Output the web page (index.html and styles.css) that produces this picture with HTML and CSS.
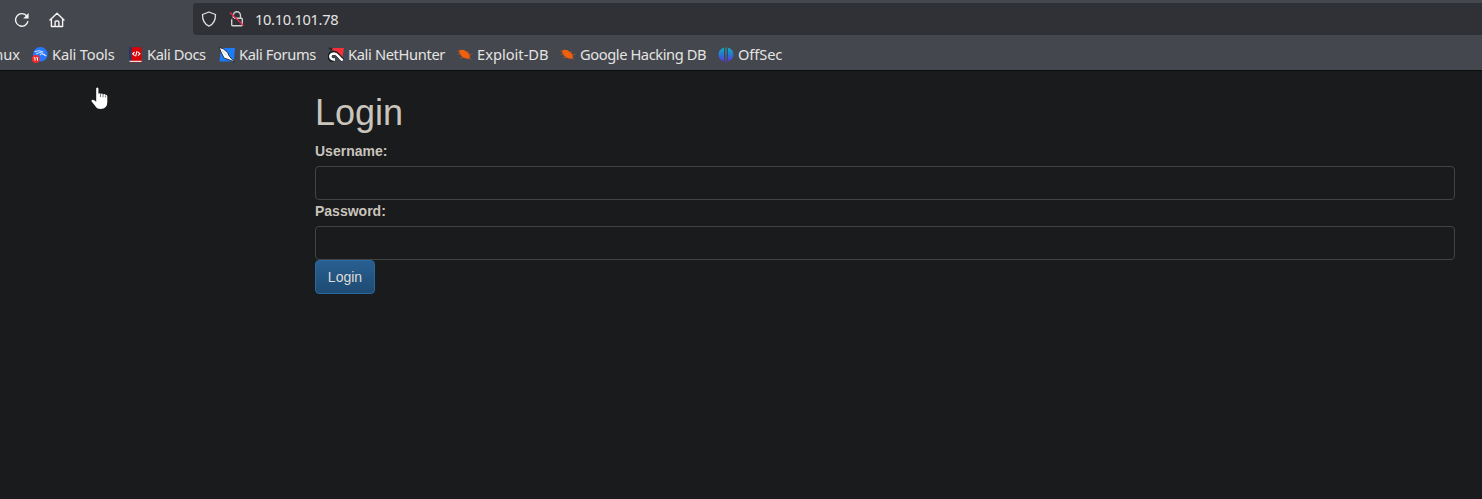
FILE: index.html
```html
<!DOCTYPE html>
<html lang="en">
<head>
<meta charset="utf-8">
<title>Login</title>
<link rel="stylesheet" href="styles.css">
</head>
<body>
<header class="chrome">
  <div class="toolbar">
    <svg class="tool reload" viewBox="0 0 16 16"><path d="M14 9.2A6.3 6.3 0 1 1 12.4 3.6L13.6 5" fill="none" stroke="#f4f4f1" stroke-width="1.4"/><path d="M14.6 1v5.6H9.2z" fill="#f4f4f1"/></svg>
    <svg class="tool home" viewBox="0 0 16 16" fill="none" stroke="#f4f4f1" stroke-width="1.4" stroke-linejoin="round" stroke-linecap="round"><path d="M1 7.9L8 1.2l7 6.7M2.4 7v7.5h11.2V7M6.1 14.3V10q0-1 1-1h1.8q1 0 1 1v4.3"/></svg>
    <div class="address">
      <svg class="shield" viewBox="0 0 16 16" fill="none" stroke="#e2e2df" stroke-width="1.3" stroke-linejoin="round"><path d="M8 1L14.5 3.5C14.6 9 12.4 13.2 8 15.2 3.6 13.2 1.4 9 1.5 3.5z"/></svg>
      <svg class="lock" viewBox="0 0 16 16" fill="none"><path d="M4.3 7V4.4a3.6 3.6 0 0 1 7.2 0V7M2.7 8.2v5.5q0 1 1 1h8.6q1 0 1-1V8.2q0-1-1-1H5" stroke="#d0d0ce" stroke-width="1.4"/><path d="M1 1.5l13.5 13" stroke="#e22850" stroke-width="1.4"/></svg>
      <span>10.10.101.78</span>
    </div>
  </div>
  <nav class="bookmarks">
    <a class="mark cut"><span>nux</span></a>
    <a class="mark tools"><svg viewBox="0 0 16 16"><circle cx="8.4" cy="7.3" r="7.2" fill="#2777ff"/><path d="M2.5 4.7Q7 2.7 11.5 5M4 7q4.5-2.5 6.5-.5 1 2 4 2.4M8 8q1-2 5-.5" fill="none" stroke="#d9e9ff"/><circle cx="3.8" cy="12" r="4" fill="#ef2929"/><path d="M1.8 10.7h1.2v3M4.3 10.7h1.2v3" fill="none" stroke="#fff"/></svg><span>Kali Tools</span></a>
    <a class="mark docs"><svg viewBox="0 0 16 16"><path d="M1 0h3v14H1z" fill="#213c67"/><path d="M3.5.2h10v15H2v-1h1.5z" fill="#da0007"/><path d="M1 13.8h12.5V15H2z" fill="#edd"/><path d="M6.6 5L4.7 6.8l1.9 1.8M10 5l1.9 1.8L10 8.6M9 4.2L7.6 9.3" fill="none" stroke="#fff" stroke-width="1.1"/></svg><span>Kali Docs</span></a>
    <a class="mark forums"><svg viewBox="0 0 16 16"><path d="M2 1h14l-1.2 13.5H.5z" fill="#1b7bfa"/><path d="M0 .3L4.5 2l4 3.5 2 4 5.3 5.7-5.6-2.4-5-1.6-2.6-5z" fill="#fff" stroke="#202329" stroke-width=".9"/><path d="M3 3.5l5 5" stroke="#a4b3c7" stroke-width=".7"/></svg><span>Kali Forums</span></a>
    <a class="mark hunter"><svg viewBox="0 0 16 16"><path d="M3 1h13l-2 12z" fill="#f5303a"/><path d="M0 .8h5l-2 3zM1 11l1 4 3-1z" fill="#26282d"/><path d="M5.5 13C-.2 12.5 1 6 6 5.8c4 0 4.5 5 9.2 7.6" fill="none" stroke="#191b20" stroke-width="4.2"/><path d="M7 12.5C.8 13 1 6.8 6 6.4c4 0 4 4.2 8.8 6.9" fill="none" stroke="#fff" stroke-width="2.5"/></svg><span>Kali NetHunter</span></a>
    <a class="mark exploit"><svg viewBox="0 0 16 16"><path d="M1.6 4L4 2.7 7 3l3.5 2.3 2 2.2.5 4-3 .3-4-1.3L3.5 8z" fill="#f2600c"/><path d="M.5 7.2h4M3 11l4-1M.5 4l3 1M10 5.5L12 4M11 7.5l4.5-.3M12 10l2 3" fill="none" stroke="#b8562b" stroke-width=".7"/></svg><span>Exploit-DB</span></a>
    <a class="mark hacking"><svg viewBox="0 0 16 16"><path d="M1.6 4L4 2.7 7 3l3.5 2.3 2 2.2.5 4-3 .3-4-1.3L3.5 8z" fill="#f2600c"/><path d="M.5 7.2h4M3 11l4-1M.5 4l3 1M10 5.5L12 4M11 7.5l4.5-.3M12 10l2 3" fill="none" stroke="#b8562b" stroke-width=".7"/></svg><span>Google Hacking DB</span></a>
    <a class="mark offsec"><svg viewBox="0 0 16 16"><defs><linearGradient id="og" x2="0" y2="1"><stop stop-color="#10aebf"/><stop offset=".5" stop-color="#2876cf"/><stop offset="1" stop-color="#682bdc"/></linearGradient></defs><path d="M6 .8v13.5C2.6 13.5.6 10.8.6 7.5S2.8 1.5 6 .8zM10 .8v13.5c3.4-.8 5.4-3.5 5.4-6.8S13.2 1.5 10 .8zM7.4.5h1.2v15H7.4z" fill="url(#og)"/></svg><span>OffSec</span></a>
  </nav>
</header>
<main class="page">
  <form class="login">
    <h1>Login</h1>
    <label for="user">Username:</label>
    <input id="user" type="text">
    <label for="pass">Password:</label>
    <input id="pass" type="password">
    <button type="button">Login</button>
  </form>
</main>
<svg class="pointer" viewBox="0 0 17 23"><path d="M5.2 1.2Q6.4-.2 7.4 1.2v5.5q1.6-1 2.3.2 1.6-.8 2.3.5 1.8-.8 2.6.5 1.7-.3 1.7 1.8V15q0 7-6.7 7-4 0-5.7-3.5L.8 14.8Q0 13 1.4 12.7q1.7-.1 3.8 2.1z" fill="#fff"/><path d="M9.5 7v3M12 7.3v3M14.4 8.5v2" stroke="#1b1c22" stroke-width=".6"/></svg>
</body>
</html>
```
FILE: styles.css
```css
* { box-sizing: border-box; }
body {
  margin: 0;
  height: 499px;
  overflow: hidden;
  background: #191b1c;
  color: #c9c4bc;
  font: 14px/20px "Liberation Sans", Arial, sans-serif;
}
.chrome {
  height: 71px;
  overflow: hidden;
  background: #45474f;
  border-bottom: 1px solid #0c0c0d;
  color: #e4e4e2;
  font-family: "Noto Sans", sans-serif;
}
.toolbar {
  display: flex;
  align-items: center;
  height: 35px;
  padding: 3px 0 0 14px;
}
svg { display: block; width: 16px; height: 16px; flex: none; }
.tool { margin-top: 2px; }
.home { margin-left: 19px; }
.address {
  display: flex;
  align-items: center;
  flex: 1;
  height: 32px;
  margin-left: 128px;
  padding: 1px 0 0 8px;
  background: #303136;
  border-radius: 4px 0 0 4px;
  font-size: 14.67px;
  letter-spacing: -.33px;
}
.address svg { margin-bottom: 1px; }
.address span, .mark span { padding-bottom: 2px; }
.lock { margin: 0 10px 0 12px; }
.bookmarks { display: flex; height: 35px; padding-top: 2px; }
.mark {
  display: flex;
  align-items: center;
  gap: 4px;
  height: 36px;
  flex: none;
  white-space: nowrap;
  font-size: 14.67px;
}
.cut { width: 32px; padding-right: 12px; justify-content: flex-end; }
.tools { width: 96px; letter-spacing: -.18px; }
.docs { width: 91px; letter-spacing: -.4px; }
.docs svg { margin-right: -1px; }
.forums { width: 109px; letter-spacing: -.36px; }
.hunter { width: 129px; letter-spacing: -.35px; }
.exploit { width: 103px; }
.hacking { width: 158px; letter-spacing: -.41px; }
.offsec { letter-spacing: -.1px; }
.login { width: 1140px; margin: 22px 0 0 315px; }
h1 { margin: 0 0 9px; font-size: 36px; font-weight: normal; line-height: 39px; }
label { display: block; height: 20px; margin-bottom: 5px; font-weight: bold; }
input {
  display: block;
  width: 100%;
  height: 34px;
  padding: 6px 12px;
  background: #191b1c;
  color: #c9c4bc;
  border: 1px solid #414345;
  border-radius: 4px;
}
input + label { padding-top: 1px; height: 21px; }
button {
  display: block;
  width: 60px;
  height: 34px;
  padding: 0;
  border: 1px solid #2867a0;
  border-radius: 4px;
  background: linear-gradient(#285f91, #1e4b72);
  color: #dedbd5;
  font: 14px/20px "Liberation Sans", Arial, sans-serif;
}
.pointer { position: absolute; left: 91px; top: 87px; width: 17px; height: 23px; }
```
